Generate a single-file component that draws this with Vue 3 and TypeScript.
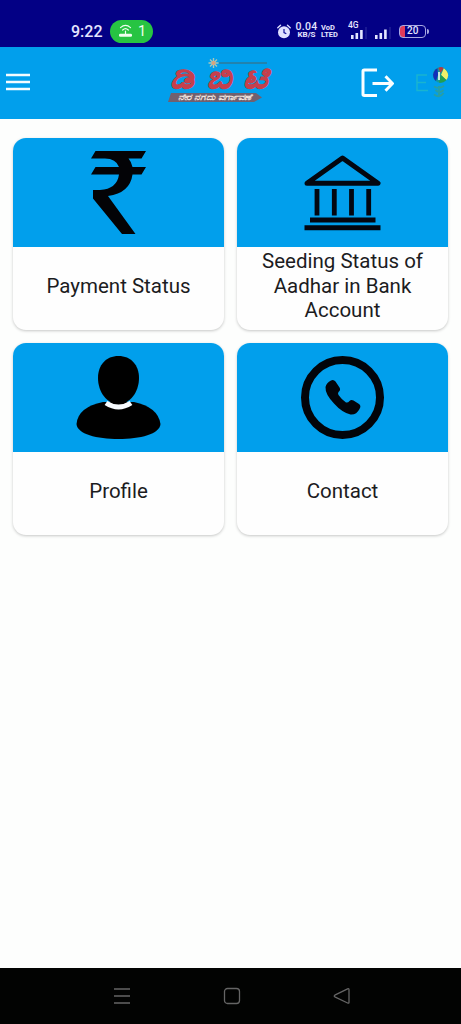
<script setup lang="ts">
type IconName = 'rupee' | 'bank' | 'profile' | 'phone'

interface Tile {
  icon: IconName
  label: string
}

const tiles: Tile[] = [
  { icon: 'rupee', label: 'Payment Status' },
  { icon: 'bank', label: 'Seeding Status of Aadhar in Bank Account' },
  { icon: 'profile', label: 'Profile' },
  { icon: 'phone', label: 'Contact' },
]
</script>

<template>
  <div class="screen">
    <header class="status">
      <span class="clock">9:22</span>
      <span class="hotspot">
        <svg width="15" height="14" viewBox="0 0 15 14" fill="none" stroke="#effff0" stroke-width="1.2" stroke-linecap="round">
          <path d="M2.500 3.600Q7.500-1 12.500 3.600M4.700 6Q7.500 3.300 10.300 6" />
          <path d="M7.500 7v3" />
          <rect x="1" y="9.800" width="13" height="3" rx="1.300" fill="#effff0" stroke="none" />
        </svg>
        <span>1</span>
      </span>
      <svg class="alarm" width="14" height="15" viewBox="0 0 14 15">
        <circle cx="7" cy="8.300" r="6" fill="#dfe0ff" />
        <path d="M.8 3.700 3.500 1.200M13.200 3.700 10.500 1.200" stroke="#dfe0ff" stroke-width="1.400" stroke-linecap="round" />
        <path d="M7 5v3.600l2.300 1.200" fill="none" stroke="#10109a" stroke-width="1.200" />
      </svg>
      <span class="speed"><b>0.04</b><small>KB/S</small></span>
      <span class="volte"><span>Vo<i>D</i></span><span>LTE<i>D</i></span></span>
      <span class="signal">
        <span class="net">4G</span>
        <svg width="18" height="13" viewBox="0 0 18 13">
          <path d="M2.300 13V9M6.800 13V7M11.400 13V4" stroke="#e4e5ff" stroke-width="2.600" />
          <path d="M16 13V1" stroke="#191892" stroke-width="2" />
        </svg>
      </span>
      <svg class="signal2" width="18" height="13" viewBox="0 0 18 13">
        <path d="M2.300 13V9M6.800 13V7M11.400 13V3.500" stroke="#e4e5ff" stroke-width="2.600" />
        <path d="M16 13V1" stroke="#191892" stroke-width="2" />
      </svg>
      <span class="battery">20</span>
    </header>

    <nav class="appbar">
      <svg class="burger" width="26" height="20" viewBox="0 0 26 20">
        <path d="M1 3h24M1 10h24M1 17h24" stroke="#f4fcff" stroke-width="2.600" />
      </svg>
      <div class="brand">
        <div class="brand-top">
          <svg width="11" height="10" viewBox="0 0 11 10">
            <path d="M5.500 0v10M.5 5h10M2 1.500l7 7M9 1.500l-7 7" stroke="#a9c6b8" stroke-width="1.400" />
            <circle cx="5.500" cy="5" r="2" fill="#d8a37c" />
          </svg>
          <span class="brand-line"></span>
        </div>
        <div class="brand-name"><span>ಡಿ</span><span>ಬಿ</span><span>ಟಿ</span></div>
        <div class="brand-tag"><span>ನೇರ ನಗದು ವರ್ಗಾವಣೆ</span></div>
      </div>
      <svg class="exit" width="34" height="32" viewBox="0 0 34 32" fill="none" stroke="#fafeff" stroke-width="3">
        <path d="M17 3H4.200Q3 3 3 4.200V27.300Q3 28.500 4.200 28.500H17" />
        <path d="M12.500 16.500H32M25.500 9.300l7 7.200-7 7.200" />
      </svg>
      <svg class="lang" width="36" height="36" viewBox="0 0 36 36">
        <path d="M13 10H3v15.500h11M3 17.500h9" fill="none" stroke="#19b4d0" stroke-width="1.500" />
        <circle cx="26.500" cy="10" r="7.700" fill="#16999b" />
        <path d="M23.500 3.200A7.700 7.700 0 0 0 22 16.100L24 10z" fill="#112fba" />
        <path d="M24.300 3.100Q27 1 29.800 3.200L26.500 8z" fill="#b03c45" />
        <path d="M29.800 3.200Q37 9 32.300 15L27 10z" fill="#f0f06a" />
        <path d="m27 10 5.300 5Q29 18.500 25 17.500z" fill="#239f50" />
        <path d="M25 7v8" stroke="#c5e9db" stroke-width="2" />
        <path d="M20 21.500q5 3 10-.5M21.500 25q4 4 8 0M20 29.500q6 4 9.500-1.500M25 21v11" fill="none" stroke="#2f9f96" stroke-width="1.900" opacity=".85" />
      </svg>
    </nav>

    <main class="grid">
      <section v-for="tile in tiles" :key="tile.label" class="card">
        <div class="card-icon">
          <svg v-if="tile.icon === 'rupee'" width="211" height="109" viewBox="0 0 211 109">
            <path d="M82.500 13H133L128.500 20.500H115.500Q118.500 24 119.500 29H133L128.500 36.500H119.500Q117 55 95 58L122.500 96H109L80 60.500V52H87Q104 51 106 36.500H78L82.500 29H106Q103 20.500 92 20.500H78z" fill="#030306" />
          </svg>
          <svg v-else-if="tile.icon === 'bank'" width="211" height="109" viewBox="0 0 211 109" fill="none" stroke="#030710">
            <path d="M70 45.200 105.500 20 141 45.200z" stroke-width="5" stroke-linejoin="round" />
            <path d="M80 53.500v21.500M97.300 53.500v21.500M114.500 53.500v21.500M131.700 53.500v21.500" stroke-width="4.800" stroke-linecap="square" />
            <path d="M73 82h65.500M67.500 89.700h76" stroke-width="5" />
          </svg>
          <svg v-else-if="tile.icon === 'profile'" width="211" height="109" viewBox="0 0 211 109">
            <path d="M90 59Q65 64 63.500 81C64 91 84 96 105.500 96S147 91 147.500 81Q145 64 121 59Z" fill="#000" />
            <path d="M93 60Q105.500 68 118 60" fill="none" stroke="#f7fbff" stroke-width="5" />
            <path d="M105.500 13C118 13 126 22 126 35C126 49 117 61 105.500 61S85 49 85 35C85 22 93 13 105.500 13Z" fill="#000" />
          </svg>
          <svg v-else width="211" height="109" viewBox="0 0 211 109">
            <circle cx="105.500" cy="54.500" r="37.500" fill="none" stroke="#02040a" stroke-width="8" />
            <path d="M94 37.500Q96.500 36 98.500 38.500L102.500 44.500Q104 47 101.500 49Q100.500 50.500 101.500 52Q105 57 109 59.500Q111 60 112.500 58Q114 56.500 116.500 57.500L122 61Q124.500 63 122.500 66Q119.500 72 113.500 71.500Q105 69.500 97 60.500Q88 51 88.500 44Q89.500 39.500 94 37.500Z" fill="#02040a" />
          </svg>
        </div>
        <div class="card-label"><span>{{ tile.label }}</span></div>
      </section>
    </main>

    <footer class="sysnav">
      <svg width="20" height="20" viewBox="0 0 20 20" fill="none" stroke="#656565" stroke-width="1.300">
        <path d="M2 3h16M2 10h16M2 17h16" />
      </svg>
      <svg width="20" height="20" viewBox="0 0 20 20" fill="none" stroke="#656565" stroke-width="1.300">
        <rect x="2.500" y="2.500" width="15" height="15" rx="3" />
      </svg>
      <svg width="20" height="20" viewBox="0 0 20 20" fill="none" stroke="#656565" stroke-width="1.300" stroke-linejoin="round">
        <path d="M2.800 9.200 15.600 2.800Q17 2.300 17 3.800V16.200Q17 17.700 15.600 17L2.800 10.800Q1.600 10 2.800 9.200Z" />
      </svg>
    </footer>
  </div>
</template>

<style>
body {
  margin: 0;
}
</style>

<style scoped>
.screen {
  display: flex;
  flex-direction: column;
  width: 461px;
  height: 1024px;
  overflow: hidden;
  background: #fdfefd;
  font-family: Roboto, 'Liberation Sans', sans-serif;
}
svg {
  display: block;
  flex: none;
}
.status {
  box-sizing: border-box;
  display: flex;
  align-items: center;
  height: 47px;
  padding: 15px 0 0 71px;
  background: #030085;
  color: #e4e5ff;
}
.clock {
  width: 39px;
  font-size: 16px;
  font-weight: 500;
}
.hotspot {
  box-sizing: border-box;
  display: flex;
  align-items: center;
  gap: 5px;
  width: 43px;
  height: 23px;
  padding-left: 8px;
  border-radius: 12px;
  background: #27c442;
  color: #effff0;
  font-size: 14.500px;
}
.alarm {
  margin-left: 124px;
}
.speed {
  display: flex;
  flex-direction: column;
  align-items: center;
  width: 23px;
  margin-left: 4px;
}
.speed b {
  font-size: 10.500px;
  font-weight: 500;
  letter-spacing: .25px;
  line-height: 9px;
}
.speed small {
  font-size: 8px;
  font-weight: 700;
  line-height: 8.500px;
}
.volte {
  display: flex;
  flex-direction: column;
  width: 17px;
  margin-left: 3px;
  font-size: 7.500px;
  font-weight: 700;
  line-height: 7.500px;
}
.volte i {
  font-style: normal;
}
.signal {
  position: relative;
  margin: 2px 0 0 12px;
}
.net {
  position: absolute;
  top: -5px;
  left: -2px;
  font-size: 8.500px;
  font-weight: 500;
  line-height: 9px;
}
.signal2 {
  margin: 2px 0 0 6px;
}
.battery {
  box-sizing: border-box;
  position: relative;
  width: 27px;
  height: 13px;
  margin-left: 7px;
  padding-left: 7px;
  border: 1.500px solid #a9a9e2;
  border-radius: 4px;
  background: linear-gradient(90deg, #e13a5a 5px, transparent 5px);
  font-size: 10px;
  font-weight: 500;
  line-height: 10.500px;
}
.battery::after {
  content: '';
  position: absolute;
  top: 3px;
  right: -3.500px;
  width: 2px;
  height: 5px;
  border-radius: 0 2px 2px 0;
  background: #a9a9e2;
}
.appbar {
  box-sizing: border-box;
  display: flex;
  align-items: flex-start;
  height: 71.500px;
  padding-left: 5px;
  background: #019fec;
}
.burger {
  margin-top: 25px;
}
.brand {
  width: 106px;
  margin: 11px 0 0 137px;
  color: #c63f4d;
}
.brand-top {
  display: flex;
  align-items: center;
  height: 10px;
  padding-left: 40px;
}
.brand-line {
  width: 48px;
  height: 1.500px;
  background: #2283ae;
}
.brand-name {
  display: flex;
  justify-content: space-between;
  height: 25px;
  padding: 0 9px 0 4px;
  font-size: 31px;
  font-style: italic;
  font-weight: 900;
  line-height: 20px;
  -webkit-text-stroke: 1px #c63f4d;
}
.brand-name span {
  transform: scaleX(1.2);
}
.brand-tag {
  width: 94px;
  height: 9px;
  background: #71606f;
  clip-path: polygon(3px 0, 88px 0, 94px 50%, 86px 100%, 0 100%);
  color: #f1e4df;
  font-size: 8.500px;
  font-style: italic;
  font-weight: 700;
  line-height: 8px;
  text-align: center;
  white-space: nowrap;
}
.brand-tag span {
  display: inline-block;
  transform: scaleX(1.2);
}
.exit {
  margin: 20px 0 0 86px;
}
.lang {
  margin: 18px 0 0 20px;
}
.grid {
  display: grid;
  flex: 1;
  grid-template-columns: 211px 211px;
  grid-auto-rows: 192px;
  gap: 13px;
  align-content: start;
  padding: 19.500px 0 0 13px;
}
.card {
  overflow: hidden;
  border-radius: 13px;
  background: #fefefe;
  box-shadow: 0 1px 3px rgb(0 0 0 / 22%);
}
.card-icon {
  height: 109px;
  background: #019fec;
}
.card-label {
  display: flex;
  align-items: center;
  justify-content: center;
  height: 78px;
  padding: 0 16px;
  color: #1c1c1e;
  font-size: 20.500px;
  line-height: 24.500px;
  text-align: center;
}
.sysnav {
  box-sizing: border-box;
  display: flex;
  gap: 90px;
  height: 56px;
  padding: 18px 0 0 112px;
  background: #020302;
}
</style>
